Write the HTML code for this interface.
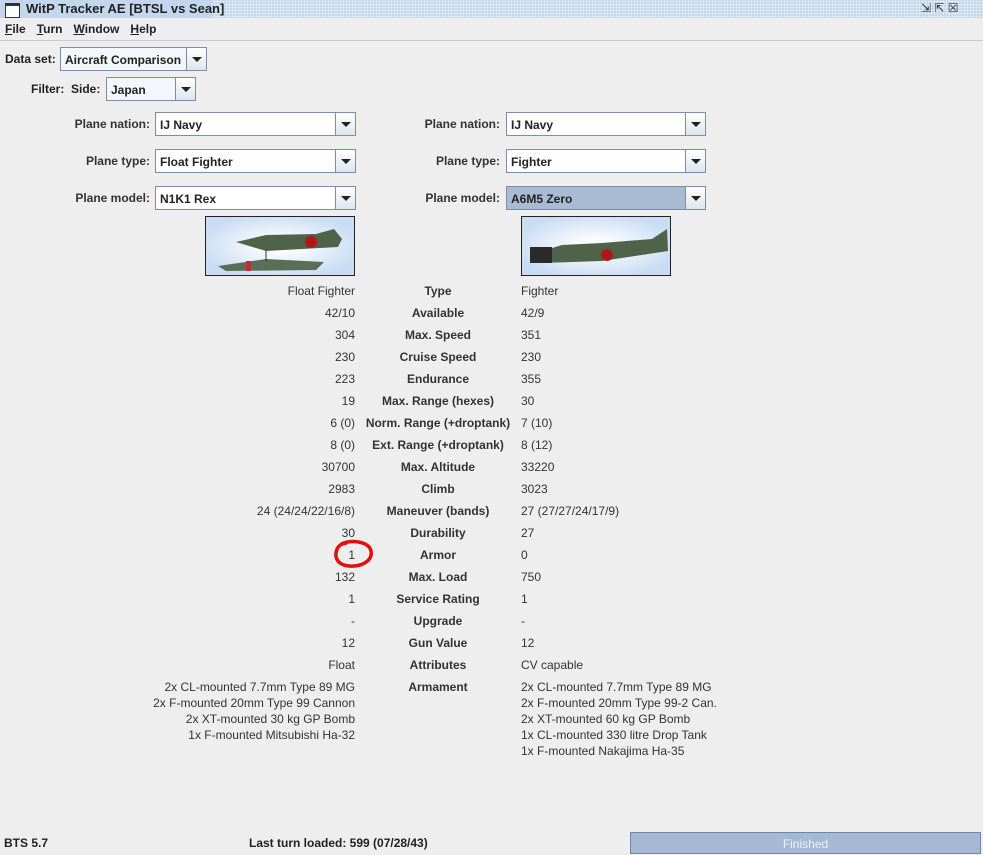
<!DOCTYPE html>
<html><head><meta charset="utf-8"><style>
body{margin:0;width:983px;height:850px;background:#eeeeee;font-family:"Liberation Sans",Arial,sans-serif;font-size:12px;color:#333;position:relative;overflow:hidden}
.a{position:absolute;white-space:nowrap}
.title{left:0;top:0;width:983px;height:18px;background:#c4d6ec;background-image:radial-gradient(#e8f0f8 1px,transparent 1px);background-size:3px 3px}
.tt{left:0;top:0;height:18px;background:#c4d6ec;padding-left:26px;font-weight:bold;font-size:13px;line-height:18px;color:#222;width:186px}
.menu{top:18px;left:0;width:983px;height:22px;border-bottom:1px solid #ccc;line-height:22px;font-size:12px;color:#222;font-weight:bold}
.menu span{margin-left:5px;margin-right:6px}
.cb{position:absolute;height:24px;border:1px solid #7a8ea8;background:#fff;font-weight:bold;font-size:12px;line-height:24px;box-sizing:border-box;padding-left:4px;color:#222}
.cb i{position:absolute;right:0;top:0;width:19px;height:22px;border-left:1px solid #7a8ea8;background:linear-gradient(#fff,#dde5ee)}
.cb i:after{content:"";position:absolute;left:5px;top:9px;border-left:5px solid transparent;border-right:5px solid transparent;border-top:5px solid #222}
.lb{position:absolute;font-weight:bold;color:#333;line-height:24px;text-align:right}
.L{position:absolute;right:628px;text-align:right}
.M{position:absolute;left:338px;width:200px;text-align:center;font-weight:bold}
.R{position:absolute;left:521px}
.img{position:absolute;border:1px solid #222;background:radial-gradient(ellipse at center,#fff 10%,#c9dcf3 80%)}
</style></head><body>
<div class="a title"></div>
<div class="a tt">WitP Tracker AE [BTSL vs Sean]</div>
<div class="a" style="left:5px;top:3px;width:13px;height:11px;border:1px solid #333;background:#fff;border-top-width:3px"></div>
<div class="a" style="left:921px;top:1px;font-size:12px">⇲ ⇱ ☒</div>
<div class="a menu"><span><u>F</u>ile</span><span><u>T</u>urn</span><span><u>W</u>indow</span><span><u>H</u>elp</span></div>
<div class="lb" style="left:5px;top:47px;color:#222">Data set:</div>
<div class="cb" style="left:60px;top:47px;width:147px;background:#f3f6fa">Aircraft Comparison<i></i></div>
<div class="lb" style="left:31px;top:77px;color:#222">Filter:&nbsp;&nbsp;Side:</div>
<div class="cb" style="left:106px;top:77px;width:90px;background:#f3f6fa">Japan<i></i></div>

<div class="lb" style="right:833px;top:112px">Plane nation:</div>
<div class="cb" style="left:155px;top:112px;width:201px">IJ Navy<i></i></div>
<div class="lb" style="right:483px;top:112px">Plane nation:</div>
<div class="cb" style="left:506px;top:112px;width:200px">IJ Navy<i></i></div>
<div class="lb" style="right:833px;top:149px">Plane type:</div>
<div class="cb" style="left:155px;top:149px;width:201px">Float Fighter<i></i></div>
<div class="lb" style="right:483px;top:149px">Plane type:</div>
<div class="cb" style="left:506px;top:149px;width:200px">Fighter<i></i></div>
<div class="lb" style="right:833px;top:186px">Plane model:</div>
<div class="cb" style="left:155px;top:186px;width:201px">N1K1 Rex<i></i></div>
<div class="lb" style="right:483px;top:186px">Plane model:</div>
<div class="cb" style="left:506px;top:186px;width:200px;background:#a9bbd2">A6M5 Zero<i></i></div>

<div class="img" style="left:205px;top:216px;width:148px;height:58px">
<svg width="148" height="58"><path d="M30 25 L60 18 L110 17 L128 12 L136 22 L132 30 L60 34 Z" fill="#4f6348"/><circle cx="105" cy="25" r="6" fill="#b01818"/><path d="M12 49 L60 42 L118 45 L110 53 L20 54 Z" fill="#5a6d55"/><rect x="40" y="44" width="5" height="10" fill="#b83030"/><line x1="60" y1="33" x2="60" y2="44" stroke="#333"/></svg></div>
<div class="img" style="left:521px;top:216px;width:148px;height:58px">
<svg width="148" height="58"><path d="M10 37 L40 28 L80 26 L130 22 L145 12 L146 34 L80 44 L20 46 Z" fill="#4f6348"/><circle cx="85" cy="38" r="6" fill="#b01818"/><rect x="8" y="30" width="22" height="16" fill="#2a2a2a"/></svg></div>

<div style="position:absolute;top:280px;left:0;width:983px;line-height:22px">
<div class="L" style="top:0">Float Fighter</div><div class="M" style="top:0">Type</div><div class="R" style="top:0">Fighter</div>
<div class="L" style="top:22px">42/10</div><div class="M" style="top:22px">Available</div><div class="R" style="top:22px">42/9</div>
<div class="L" style="top:44px">304</div><div class="M" style="top:44px">Max. Speed</div><div class="R" style="top:44px">351</div>
<div class="L" style="top:66px">230</div><div class="M" style="top:66px">Cruise Speed</div><div class="R" style="top:66px">230</div>
<div class="L" style="top:88px">223</div><div class="M" style="top:88px">Endurance</div><div class="R" style="top:88px">355</div>
<div class="L" style="top:110px">19</div><div class="M" style="top:110px">Max. Range (hexes)</div><div class="R" style="top:110px">30</div>
<div class="L" style="top:132px">6 (0)</div><div class="M" style="top:132px">Norm. Range (+droptank)</div><div class="R" style="top:132px">7 (10)</div>
<div class="L" style="top:154px">8 (0)</div><div class="M" style="top:154px">Ext. Range (+droptank)</div><div class="R" style="top:154px">8 (12)</div>
<div class="L" style="top:176px">30700</div><div class="M" style="top:176px">Max. Altitude</div><div class="R" style="top:176px">33220</div>
<div class="L" style="top:198px">2983</div><div class="M" style="top:198px">Climb</div><div class="R" style="top:198px">3023</div>
<div class="L" style="top:220px">24 (24/24/22/16/8)</div><div class="M" style="top:220px">Maneuver (bands)</div><div class="R" style="top:220px">27 (27/27/24/17/9)</div>
<div class="L" style="top:242px">30</div><div class="M" style="top:242px">Durability</div><div class="R" style="top:242px">27</div>
<div class="L" style="top:264px">1</div><div class="M" style="top:264px">Armor</div><div class="R" style="top:264px">0</div>
<div class="L" style="top:286px">132</div><div class="M" style="top:286px">Max. Load</div><div class="R" style="top:286px">750</div>
<div class="L" style="top:308px">1</div><div class="M" style="top:308px">Service Rating</div><div class="R" style="top:308px">1</div>
<div class="L" style="top:330px">-</div><div class="M" style="top:330px">Upgrade</div><div class="R" style="top:330px">-</div>
<div class="L" style="top:352px">12</div><div class="M" style="top:352px">Gun Value</div><div class="R" style="top:352px">12</div>
<div class="L" style="top:374px">Float</div><div class="M" style="top:374px">Attributes</div><div class="R" style="top:374px">CV capable</div>
<div class="M" style="top:396px">Armament</div>
<div class="L" style="top:399px;line-height:16px">2x CL-mounted 7.7mm Type 89 MG<br>2x F-mounted 20mm Type 99 Cannon<br>2x XT-mounted 30 kg GP Bomb<br>1x F-mounted Mitsubishi Ha-32</div>
<div class="R" style="top:399px;line-height:16px">2x CL-mounted 7.7mm Type 89 MG<br>2x F-mounted 20mm Type 99-2 Can.<br>2x XT-mounted 60 kg GP Bomb<br>1x CL-mounted 330 litre Drop Tank<br>1x F-mounted Nakajima Ha-35</div>
</div>
<svg class="a" style="left:333px;top:539px" width="42" height="30"><path d="M8 5 C20 0 36 3 38 12 C40 22 28 28 16 27 C4 26 1 18 4 10 C6 6 10 4 14 4" fill="none" stroke="#e01010" stroke-width="3.5"/></svg>

<div class="a" style="left:4px;top:836px;font-weight:bold;font-size:12px;color:#222">BTS 5.7</div>
<div class="a" style="left:249px;top:836px;font-weight:bold;font-size:12px;color:#222">Last turn loaded: 599 (07/28/43)</div>
<div class="a" style="left:630px;top:832px;width:349px;height:20px;border:1px solid #6f87a8;background:#a6b9d2;color:#eef;text-align:center;line-height:22px">Finished</div>
</body></html>
